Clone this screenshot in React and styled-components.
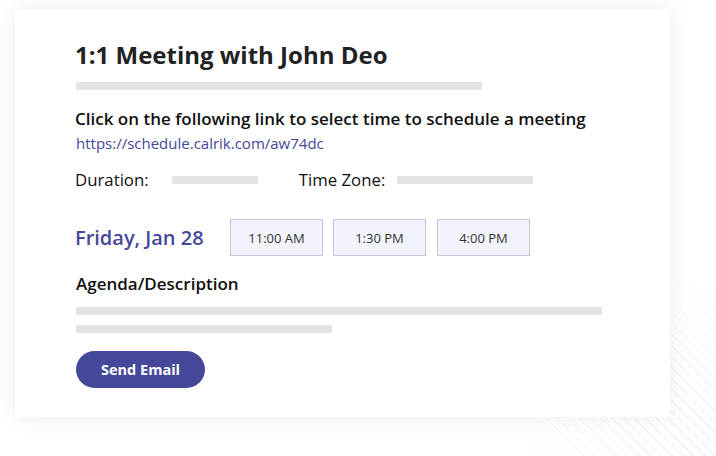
import React from 'react'
import styled, { createGlobalStyle } from 'styled-components'

const GlobalStyle = createGlobalStyle`
  html, body {
    margin: 0;
    padding: 0;
    background: #ffffff;
    font-family: "Open Sans", "Noto Sans", sans-serif;
  }
`

const Pagina = styled.div`
  position: relative;
  width: 716px;
  height: 456px;
  overflow: hidden;
  padding: 10px 0 0 15px;
  box-sizing: border-box;
`

const Listras = styled.svg`
  position: absolute;
  right: 0;
  bottom: 0;
  width: 200px;
  height: 180px;
`

const Cartao = styled.div`
  position: relative;
  width: 655px;
  height: 407px;
  background: #ffffff;
  box-shadow: 0 0 22px rgba(0, 0, 0, 0.08);
  box-sizing: border-box;
  padding: 29px 0 0 60px;
  display: flex;
  flex-direction: column;
  align-items: flex-start;
`

const Titulo = styled.h1`
  margin: 0;
  font-size: 24px;
  font-weight: 700;
  color: #222222;
  line-height: 32px;
`

// barras cinzas de placeholder
const Barra = styled.div`
  height: 8px;
  width: ${(p) => p.largura}px;
  background: #e4e4e4;
  margin-left: ${(p) => p.recuo || 0}px;
  margin-top: ${(p) => p.topo || 0}px;
  flex-shrink: 0;
`

const Instrucao = styled.p`
  margin: 17px 0 0;
  font-size: 17px;
  font-weight: 600;
  color: #111111;
  line-height: 24px;
`

const Link = styled.a`
  font-size: 15px;
  color: #45479a;
  text-decoration: none;
  line-height: 22px;
  margin: 1px 0 0 1px;
`

const LinhaInfo = styled.div`
  display: flex;
  align-items: center;
  margin-top: 15px;
`

const Rotulo = styled.span`
  font-size: 16.8px;
  color: #111111;
  line-height: 22px;
  margin-left: ${(p) => p.recuo || 0}px;
`

const LinhaData = styled.div`
  display: flex;
  align-items: center;
  margin-top: 28px;
`

const Data = styled.span`
  font-size: 20px;
  font-weight: 600;
  color: #45479a;
  width: 155px;
`

const Horarios = styled.div`
  display: flex;
  gap: 10px;
`

const Horario = styled.button`
  width: 93px;
  height: 37px;
  box-sizing: border-box;
  background: #f3f3fd;
  border: 1px solid #c5c5e2;
  font-family: "Open Sans", "Noto Sans", sans-serif;
  font-size: 13px;
  color: #333333;
  padding: 0;
  &:last-child {
    margin-left: 1px;
  }
`

const Subtitulo = styled.h2`
  margin: 16px 0 0 1px;
  font-size: 17px;
  font-weight: 600;
  color: #111111;
  line-height: 24px;
`

const BotaoEnviar = styled.button`
  width: 129px;
  height: 37px;
  margin: 18px 0 0 1px;
  border: none;
  border-radius: 19px;
  background: #454899;
  color: #ffffff;
  font-family: "Open Sans", "Noto Sans", sans-serif;
  font-size: 14.5px;
  font-weight: 700;
  padding: 0;
`

const horarios = ['11:00 AM', '1:30 PM', '4:00 PM']

function App() {
  const linhas = []
  for (let i = -200; i < 220; i += 11) {
    linhas.push(<line key={i} x1={i} y1={0} x2={i + 200} y2={200} stroke="#e2e2e2" strokeWidth="1" />)
  }

  return (
    <Pagina>
      <GlobalStyle />
      <Listras viewBox="0 0 200 180">
        <defs>
          <radialGradient id="fade" cx="1" cy="1" r="1">
            <stop offset="0" stopColor="#fff" stopOpacity="1" />
            <stop offset="0.8" stopColor="#fff" stopOpacity="0.35" />
            <stop offset="1" stopColor="#fff" stopOpacity="0" />
          </radialGradient>
          <mask id="m">
            <rect width="200" height="180" fill="url(#fade)" />
          </mask>
        </defs>
        <g mask="url(#m)">{linhas}</g>
      </Listras>
      <Cartao>
        <Titulo>1:1 Meeting with John Deo</Titulo>
        <Barra largura={406} recuo={1} topo={11} />
        <Instrucao>Click on the following link to select time to schedule a meeting</Instrucao>
        <Link href="#">https://schedule.calrik.com/aw74dc</Link>
        <LinhaInfo>
          <Rotulo>Duration:</Rotulo>
          <Barra largura={86} recuo={23} />
          <Rotulo recuo={41}>Time Zone:</Rotulo>
          <Barra largura={136} recuo={12} />
        </LinhaInfo>
        <LinhaData>
          <Data>Friday, Jan 28</Data>
          <Horarios>
            {horarios.map((h) => (
              <Horario key={h}>{h}</Horario>
            ))}
          </Horarios>
        </LinhaData>
        <Subtitulo>Agenda/Description</Subtitulo>
        <Barra largura={526} recuo={1} topo={11} />
        <Barra largura={256} recuo={1} topo={10} />
        <BotaoEnviar>Send Email</BotaoEnviar>
      </Cartao>
    </Pagina>
  )
}

export default App
